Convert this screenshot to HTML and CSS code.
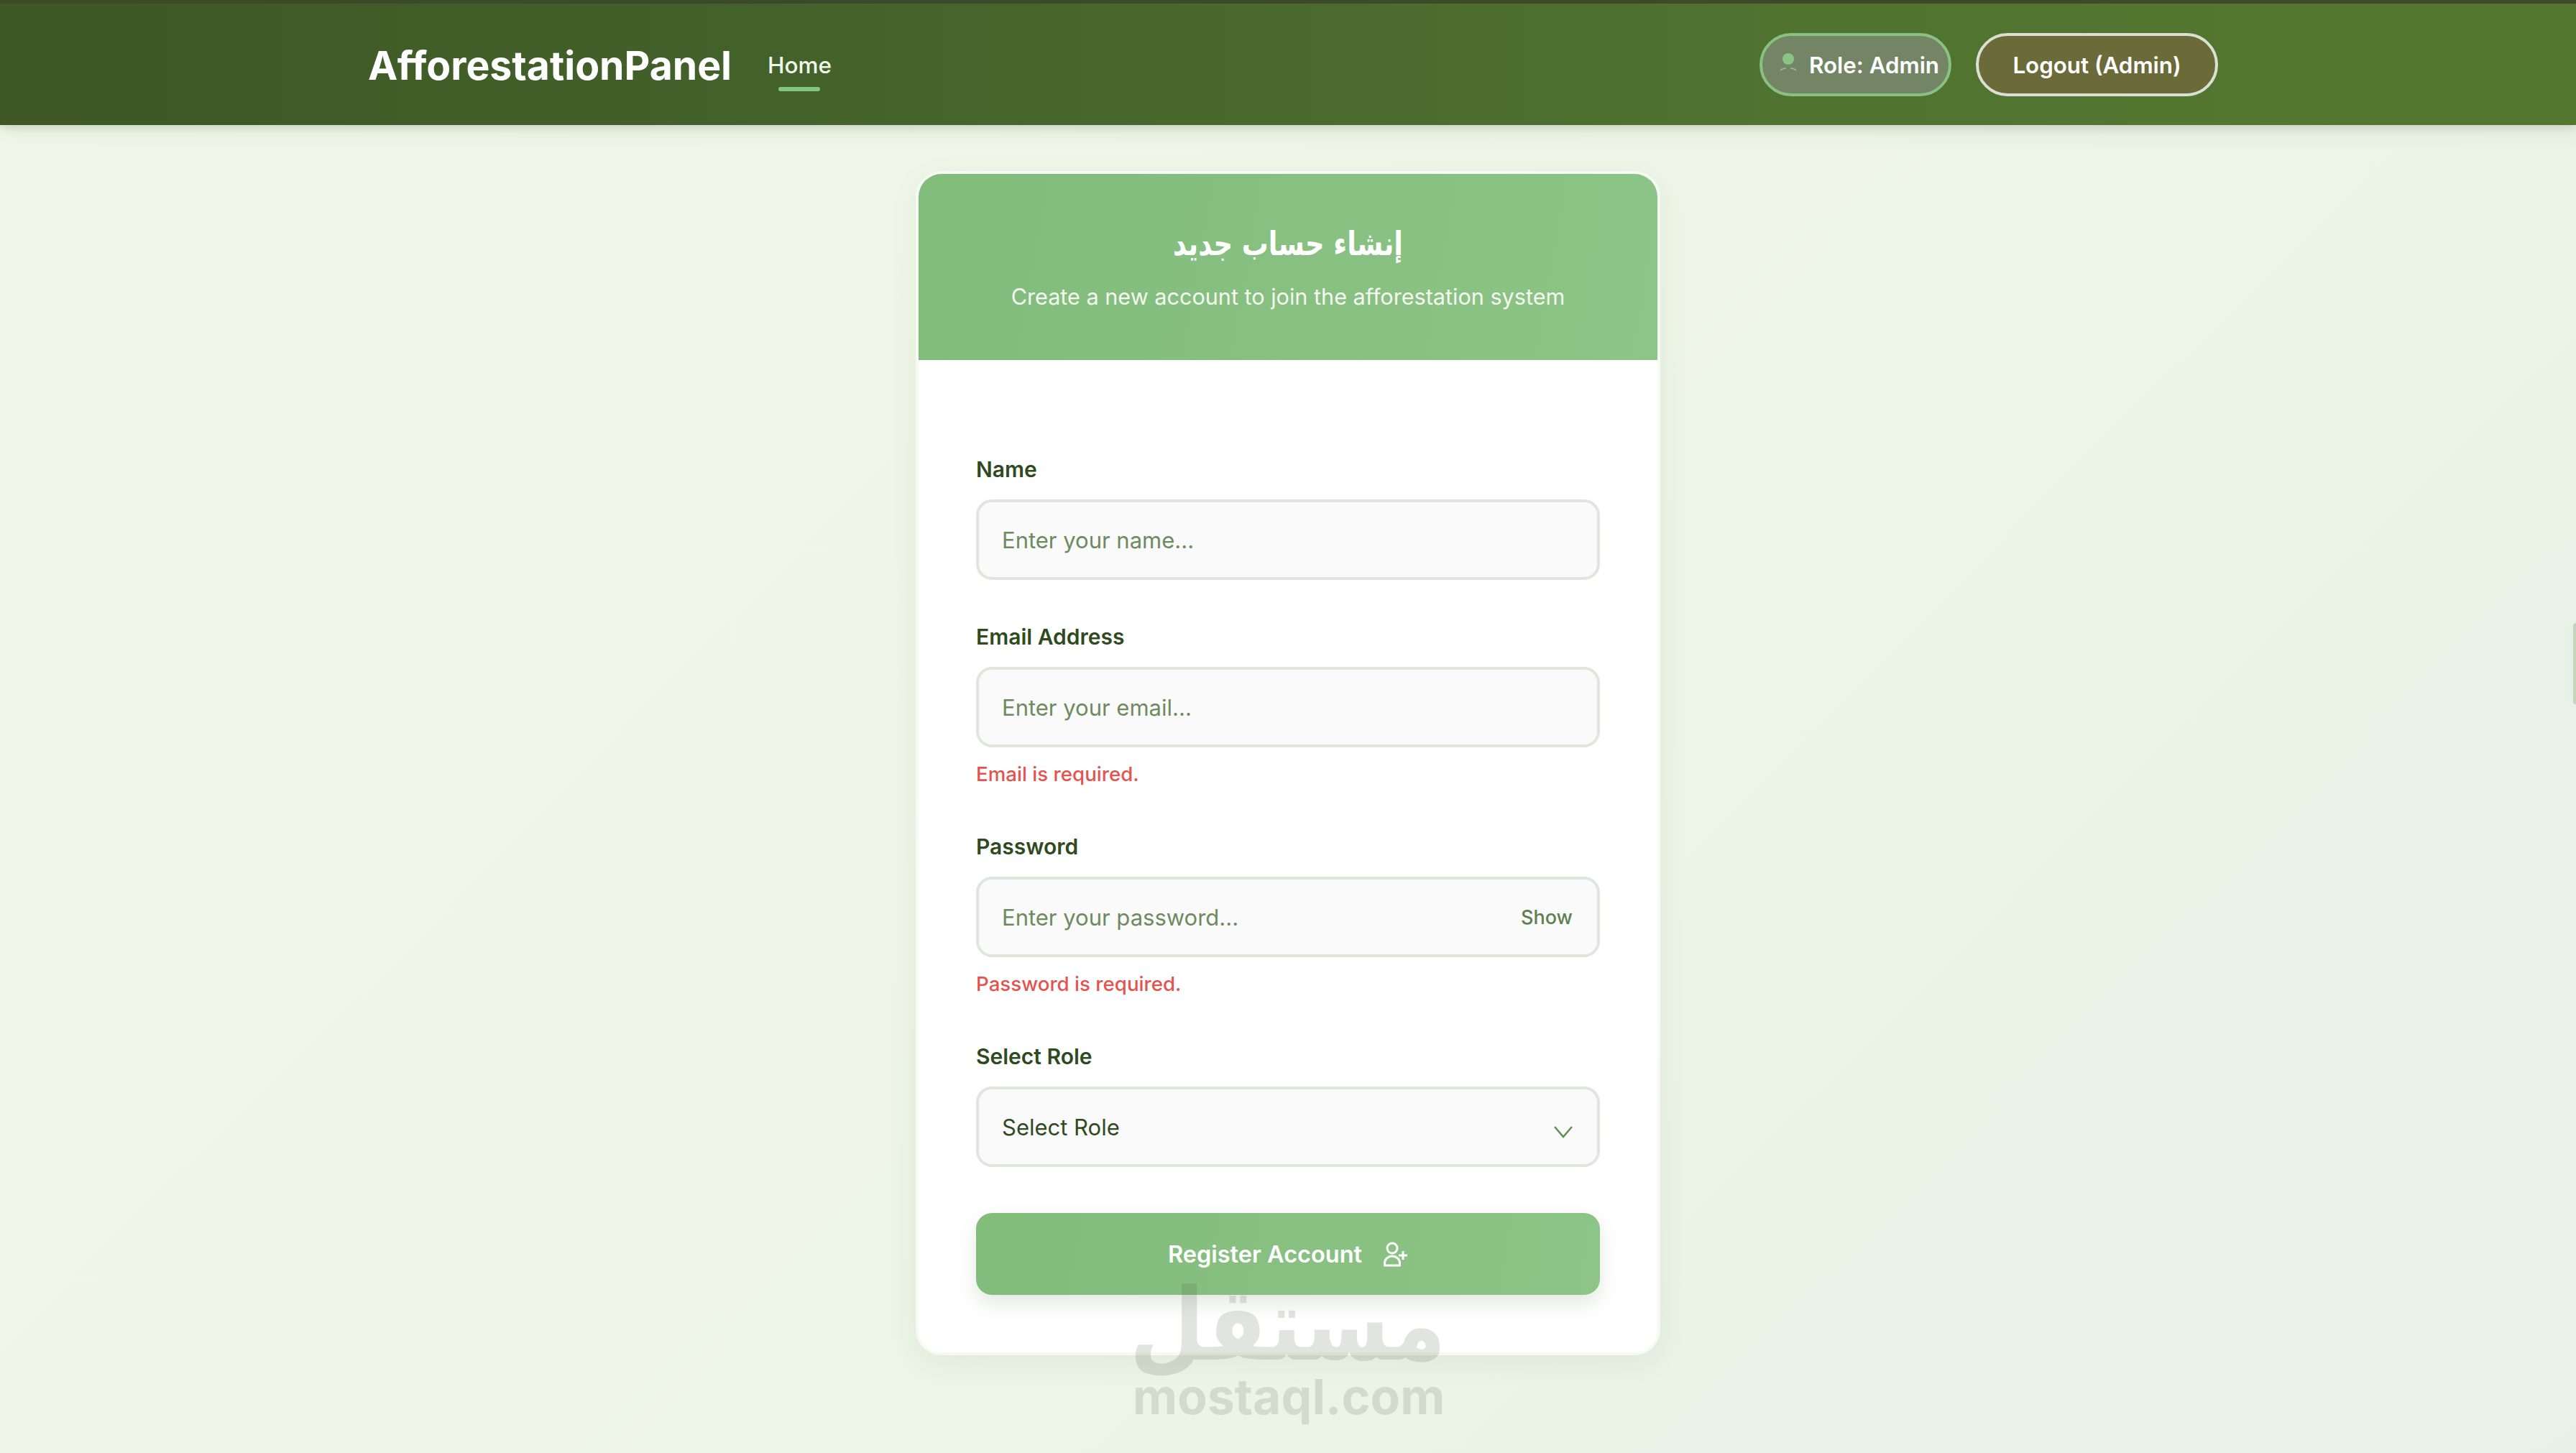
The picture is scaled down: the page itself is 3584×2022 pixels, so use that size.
FILE: index.html
```html
<!DOCTYPE html>
<html lang="en">
<head>
  <meta charset="UTF-8" />
  <title>Afforestation Panel - Register</title>
  <link rel="stylesheet" href="styles.css">
</head>
<body>
  <header class="navbar">
    <div class="nav-left">
      <a class="brand" href="#">AfforestationPanel</a>
      <a class="nav-link" href="#">Home</a>
    </div>
    <div class="nav-right">
      <div class="role-pill">
        <svg class="role-icon" viewBox="0 0 32 36" width="32" height="36">
          <circle cx="16" cy="9" r="8" fill="#8cc486" />
          <path d="M5 25 Q8 22 13 22 M19 22 Q24 22 27 25" fill="none" stroke="#8cc486" stroke-width="1.5" />
        </svg>
        <span>Role: Admin</span>
      </div>
      <button class="logout-button">Logout (Admin)</button>
    </div>
  </header>

  <main class="page">
    <section class="card">
      <div class="card-header">
        <h1 lang="ar" dir="rtl">إنشاء حساب جديد</h1>
        <p>Create a new account to join the afforestation system</p>
      </div>

      <form class="card-body">
        <div class="field">
          <label>Name</label>
          <input type="text" placeholder="Enter your name...">
        </div>

        <div class="field">
          <label>Email Address</label>
          <input type="email" placeholder="Enter your email...">
          <div class="error">Email is required.</div>
        </div>

        <div class="field">
          <label>Password</label>
          <div class="input-wrap">
            <input type="password" placeholder="Enter your password...">
            <span class="show-toggle">Show</span>
          </div>
          <div class="error">Password is required.</div>
        </div>

        <div class="field">
          <label>Select Role</label>
          <div class="input-wrap">
            <select>
              <option>Select Role</option>
            </select>
            <svg class="chevron" viewBox="0 0 28 18" width="28" height="18">
              <path d="M2 2 L14 16 L26 2" fill="none" stroke="#5f8f52" stroke-width="2.5" />
            </svg>
          </div>
        </div>

        <button type="button" class="submit-button">
          <span>Register Account</span>
          <svg viewBox="0 0 36 38" width="36" height="38">
            <circle cx="14" cy="11" r="7" fill="none" stroke="#fff" stroke-width="3" />
            <path d="M3.5 35 V32 A10.5 10 0 0 1 24.5 32 V35 Z" fill="none" stroke="#fff" stroke-width="3" stroke-linejoin="round" />
            <path d="M29 15 V27 M23 21 H35" fill="none" stroke="#fff" stroke-width="3" />
          </svg>
        </button>
      </form>
    </section>
  </main>

  <div class="side-handle"></div>

  <div class="watermark">
    <div class="wm-ar" lang="ar" dir="rtl">مستقل</div>
    <div class="wm-en">mostaql.com</div>
  </div>
</body>
</html>
```

FILE: styles.css
```css
* {
  margin: 0;
  padding: 0;
  box-sizing: border-box;
}

html, body {
  width: 100%;
  height: 100%;
  overflow: hidden;
}

body {
  position: relative;
  font-family: 'Inter', 'DejaVu Sans', sans-serif;
  background: linear-gradient(135deg, #f1f8e9 0%, #eff6e7 40%, #e7f1e6 100%);
}

/* top bar */
.navbar {
  height: 174px;
  padding: 0 498px 0 512px;
  display: flex;
  justify-content: space-between;
  align-items: center;
  border-top: 5px solid #3d4a2a;
  background: linear-gradient(90deg, #3e5725 0%, #43612a 30%, #507330 70%, #547730 100%);
  box-shadow: 0 4px 10px rgba(40, 60, 30, 0.12), 0 10px 28px rgba(40, 60, 30, 0.08);
}

.nav-left {
  padding-top: 2px;
  display: flex;
  align-items: center;
  gap: 50px;
}

.brand {
  font-size: 55.3px;
  font-weight: 700;
  color: #fff;
  text-decoration: none;
}

.nav-link {
  position: relative;
  font-size: 31.5px;
  font-weight: 500;
  color: #f1f8e9;
  text-decoration: none;
}

.nav-link::after {
  content: "";
  position: absolute;
  left: 15px;
  right: 16px;
  bottom: -17px;
  height: 6px;
  border-radius: 3px;
  background-color: #81c784;
}

.nav-right {
  display: flex;
  align-items: center;
  gap: 34px;
}

.role-pill,
.logout-button {
  height: 88px;
  padding-top: 2px;
  border-radius: 44px;
  font-family: inherit;
  font-size: 31.3px;
  font-weight: 600;
  color: #fff;
}

.role-pill {
  width: 267px;
  padding-left: 20px;
  display: flex;
  align-items: center;
  gap: 13px;
  border: 4px solid #89c183;
  background-color: #748565;
}

.role-icon {
  flex-shrink: 0;
}

.logout-button {
  width: 337px;
  border: 4px solid #dcdfd4;
  background-color: #6b6b3a;
}

/* card */
.page {
  padding-top: 64px;
  display: flex;
  justify-content: center;
}

.card {
  width: 1036px;
  border: 4px solid #f6faf2;
  border-radius: 36px;
  background: #fff;
  overflow: hidden;
  box-shadow: 0 10px 40px rgba(60, 90, 50, 0.07);
}

.card-header {
  height: 259px;
  padding-top: 65px;
  text-align: center;
  color: #fff;
  background: linear-gradient(100deg, #81bc7b 0%, #8dc487 100%);
}

.card-header h1 {
  font-size: 46px;
  font-weight: 700;
  line-height: 64px;
  font-family: 'DejaVu Sans', sans-serif;
  transform: scaleX(0.8);
}

.card-header p {
  margin-top: 20px;
  font-size: 30.6px;
  line-height: 44px;
  color: #f4f9f0;
}

.card-body {
  padding: 132px 80px 80px;
}

.field {
  margin-bottom: 59px;
}

.field:last-of-type {
  margin-bottom: 64px;
}

.field label {
  display: block;
  margin-bottom: 22px;
  font-size: 30px;
  font-weight: 600;
  line-height: 40px;
  color: #2f4a1f;
}

.field input,
.field select {
  display: block;
  width: 100%;
  height: 112px;
  padding: 0 32px;
  border: 4px solid #e0e6dc;
  border-radius: 22px;
  background-color: #fafafa;
  font-family: inherit;
  font-size: 31px;
  color: #2f4a1f;
  outline: none;
  appearance: none;
}

.field input::placeholder {
  color: #6f8a60;
  opacity: 1;
}

.input-wrap {
  position: relative;
}

.show-toggle {
  position: absolute;
  right: 38px;
  top: 50%;
  transform: translateY(-50%);
  font-size: 27px;
  font-weight: 500;
  color: #5f7f50;
}

.chevron {
  position: absolute;
  right: 37px;
  top: 54px;
}

.error {
  margin-top: 19px;
  padding-bottom: 4px;
  font-size: 27.7px;
  font-weight: 500;
  line-height: 36px;
  color: #e5534f;
}

.submit-button {
  width: 100%;
  height: 114px;
  display: flex;
  justify-content: center;
  align-items: center;
  gap: 28px;
  border: none;
  border-radius: 22px;
  background: linear-gradient(100deg, #81bc7b 0%, #8dc487 100%);
  box-shadow: 0 12px 28px rgba(60, 90, 50, 0.14);
  font-family: inherit;
  font-size: 32.5px;
  font-weight: 600;
  color: #fff;
}

/* bits laid over the page */
.side-handle {
  position: absolute;
  right: 0;
  top: 867px;
  width: 4px;
  height: 113px;
  border-radius: 4px 0 0 4px;
  background-color: #c5d5bd;
  box-shadow: 0 0 24px rgba(60, 80, 50, 0.1);
}

.watermark {
  position: absolute;
  left: 1576px;
  top: 1784px;
  width: 432px;
  text-align: center;
  color: #465038;
  opacity: 0.15;
  pointer-events: none;
}

.wm-ar {
  height: 128px;
  font-family: 'DejaVu Sans', sans-serif;
  font-size: 140px;
  font-weight: 700;
  line-height: 120px;
  white-space: nowrap;
  transform: translateX(34px) scaleX(0.86);
}

.wm-en {
  font-size: 68px;
  font-weight: 700;
  line-height: 62px;
}
```
